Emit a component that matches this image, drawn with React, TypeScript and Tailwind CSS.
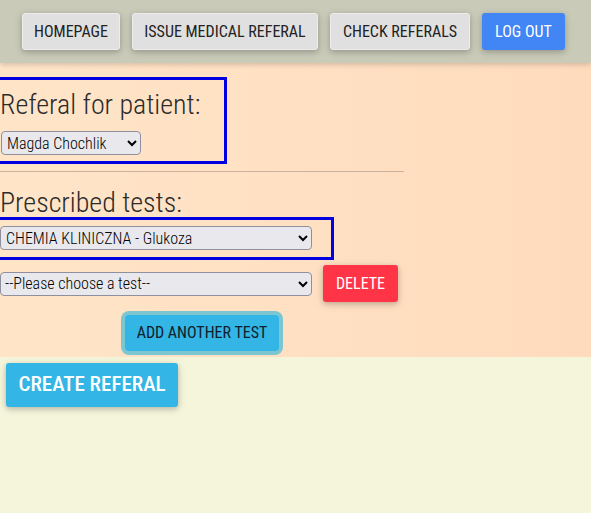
import React from "react";

const navBtn =
  "h-[37px] flex items-center justify-center rounded-[3px] text-[16px] [font-weight:370] uppercase shadow-[0_2px_5px_0_rgba(0,0,0,0.16),0_2px_10px_0_rgba(0,0,0,0.12)]";

const sel =
  "h-[24px] w-[312px] text-[16px] leading-[20px] [font-weight:350] bg-[#e9e9ed] border border-[#8f8f9d] rounded-[4px] text-black";

export default function App() {
  return (
    <div className="min-h-[513px] bg-[#f5f5dc] font-['Roboto',sans-serif] [font-stretch:84%] text-[#212529]">
      <nav className="h-[63px] bg-[#cacab9] flex items-center gap-[12px] pl-[22px] shadow-[0_2px_5px_0_rgba(0,0,0,0.16)] relative z-10">
        <button className={`${navBtn} w-[98px] bg-[#e0e0e0] border border-[#ededed] text-[#222]`}>HOMEPAGE</button>
        <button className={`${navBtn} w-[186px] bg-[#e0e0e0] border border-[#ededed] text-[#222]`}>Issue medical referal</button>
        <button className={`${navBtn} w-[140px] bg-[#e0e0e0] border border-[#ededed] text-[#222]`}>Check referals</button>
        <button className={`${navBtn} w-[83px] bg-[#4285f4] text-white`}>Log out</button>
      </nav>
      <section className="bg-linear-to-r from-[#ffe5c8] to-[#ffdbbd] pt-[14px] pb-[2px]">
        <div className="w-[227px] h-[87px] border-[3px] border-l-0 border-[#0000e0]">
          <h3 className="pt-[8px] text-[28px] leading-[34px] font-light text-[#2b2b2b]">Referal for patient:</h3>
          <select className={`${sel} mt-[9px] !w-[140px] ml-[1px] px-[1px]`}>
            <option>Magda Chochlik</option>
          </select>
        </div>
        <div className="w-[404px] h-px bg-[#c9b29b] mt-[7px]" />
        <h3 className="h-[45px] pt-[14px] text-[28px] leading-[34px] font-light text-[#2b2b2b]">Prescribed tests:</h3>
        <div className="w-[334px] h-[43px] border-[3px] border-l-0 border-[#0000e0] pt-[6px]">
          <select className={`${sel} px-[1px]`}>
            <option>CHEMIA KLINICZNA - Glukoza</option>
          </select>
        </div>
        <div className="w-[404px] mt-[5px] flex items-center gap-[11px]">
          <select className={`${sel} px-0`}>
            <option>--Please choose a test--</option>
          </select>
          <button className="h-[37px] w-[75px] flex items-center justify-center rounded-[3px] bg-[#ff3547] text-white text-[16px] [font-weight:370] shadow-[0_2px_5px_0_rgba(0,0,0,0.16),0_2px_10px_0_rgba(0,0,0,0.12)]">
            DELETE
          </button>
        </div>
        <div className="w-[404px] flex justify-center mt-[13px]">
          <button className="h-[36px] w-[154px] flex items-center justify-center rounded-[4px] bg-[#33b5e5] text-[#10202c] text-[16px] [font-weight:370] shadow-[0_0_0_4px_#7cc6d2]">
            ADD ANOTHER TEST
          </button>
        </div>
        <div className="h-[4px]" />
      </section>
      <div className="pt-[6px] pl-[6px]">
        <button className="h-[44px] w-[172px] flex items-center justify-center rounded-[3px] bg-[#33b5e5] text-white text-[21px] font-medium shadow-[0_2px_5px_0_rgba(0,0,0,0.16),0_2px_10px_0_rgba(0,0,0,0.12)]">
          CREATE REFERAL
        </button>
      </div>
    </div>
  );
}
